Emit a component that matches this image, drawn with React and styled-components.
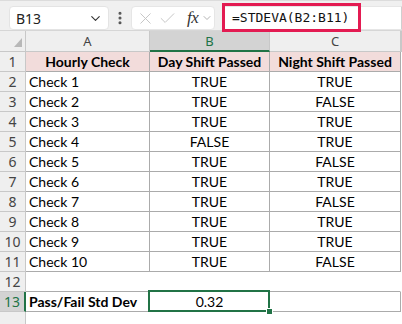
import React from "react";
import styled, { createGlobalStyle } from "styled-components";
import { ChevronDown, EllipsisVertical, X, Check } from "lucide-react";

const GlobalStyle = createGlobalStyle`
  html, body {
    margin: 0;
    padding: 0;
    background: #ffffff;
  }
  body {
    font-family: Lato, "Liberation Sans", sans-serif;
  }
`;

const GREEN = "#217346";
const PINK = "#f2dcdb";

const rows = [
  ["Check 1", "TRUE", "TRUE"],
  ["Check 2", "TRUE", "FALSE"],
  ["Check 3", "TRUE", "TRUE"],
  ["Check 4", "FALSE", "TRUE"],
  ["Check 5", "TRUE", "FALSE"],
  ["Check 6", "TRUE", "TRUE"],
  ["Check 7", "TRUE", "FALSE"],
  ["Check 8", "TRUE", "TRUE"],
  ["Check 9", "TRUE", "TRUE"],
  ["Check 10", "TRUE", "FALSE"],
];

const Window = styled.div`
  width: 402px;
  height: 324px;
  overflow: hidden;
  background: #ffffff;
  display: flex;
  flex-direction: column;
`;

const TopStrip = styled.div`
  height: 3px;
  background: #f7f7f7;
  border-bottom: 1px solid #dcdcdc;
`;

const FormulaBar = styled.div`
  box-sizing: border-box;
  height: 36px;
  background: #f0f0f0;
  border-bottom: 1px solid #d6d6d6;
  display: flex;
  align-items: flex-start;
  padding: 5px 0 0 9px;
`;

const NameBox = styled.div`
  box-sizing: border-box;
  width: 100px;
  height: 24px;
  background: #ffffff;
  border: 1px solid #e4e4e4;
  border-radius: 4px;
  display: flex;
  align-items: center;
  justify-content: space-between;
  padding: 0 5px 0 6px;
  font-family: "Noto Sans", "Liberation Sans", sans-serif;
  font-size: 14px;
  color: #222;
`;

const Dots = styled.div`
  width: 22px;
  height: 24px;
  display: flex;
  align-items: center;
  justify-content: center;
  color: #555;
`;

const ActionBox = styled.div`
  box-sizing: border-box;
  width: 84px;
  height: 24px;
  background: #ffffff;
  border: 1px solid #e6e6e6;
  border-radius: 4px;
  display: flex;
  align-items: center;
  padding-left: 4px;
  gap: 3px;
  color: #c4c4c4;
`;

const Fx = styled.span`
  font-family: "Liberation Serif", "DejaVu Serif", serif;
  font-style: italic;
  font-size: 17px;
  color: #333;
  margin-left: 7px;
  letter-spacing: -0.5px;
`;

const FormulaInput = styled.div`
  position: relative;
  box-sizing: border-box;
  flex: 1;
  height: 24px;
  margin-left: 7px;
  background: #ffffff;
  border: 1px solid #e6e6e6;
  border-right-color: #cfcfcf;
  border-radius: 4px 0 0 4px;
`;

const Highlight = styled.div`
  position: absolute;
  box-sizing: border-box;
  top: -4px;
  left: -1px;
  width: 139px;
  height: 29px;
  border: 3px solid #e31b52;
  display: flex;
  align-items: center;
  padding-left: 7px;
  font-family: "DejaVu Sans Mono", "Liberation Mono", monospace;
  font-size: 13px;
  color: #111;
`;

const Sheet = styled.div`
  display: grid;
  grid-template-columns: 26px 124px 120px 131px 1fr;
  grid-auto-rows: 20px;
  grid-template-rows: 21px;
`;

const Corner = styled.div`
  box-sizing: border-box;
  background: #efefef;
  border-right: 1px solid #c8c8c8;
  border-bottom: 1px solid #c8c8c8;
  display: flex;
  align-items: flex-end;
  justify-content: flex-end;
  padding: 0 3px 4px 0;
`;

const ColHead = styled.div`
  box-sizing: border-box;
  background: ${(p) => (p.$active ? "#d3d3d3" : "#efefef")};
  color: ${(p) => (p.$active ? GREEN : "#444")};
  border-right: 1px solid #c8c8c8;
  border-bottom: ${(p) => (p.$active ? `2px solid ${GREEN}` : "1px solid #c8c8c8")};
  font-family: "Noto Sans", "Liberation Sans", sans-serif;
  font-size: 13px;
  line-height: 20px;
  text-align: center;
`;

const RowHead = styled.div`
  box-sizing: border-box;
  background: ${(p) => (p.$active ? "#d3d3d3" : "#efefef")};
  color: ${(p) => (p.$active ? GREEN : "#444")};
  border-right: ${(p) => (p.$active ? `2px solid ${GREEN}` : "1px solid #c8c8c8")};
  border-bottom: 1px solid #c8c8c8;
  font-family: "Noto Sans", "Liberation Sans", sans-serif;
  font-size: 14px;
  line-height: 19px;
  text-align: center;
`;

const Cell = styled.div`
  position: relative;
  box-sizing: border-box;
  padding: 0 3px;
  font-size: 14px;
  line-height: 19px;
  color: #000;
  white-space: nowrap;
  text-align: ${(p) => p.$align || "left"};
  font-weight: ${(p) => (p.$bold ? 700 : 400)};
  background: ${(p) => p.$fill || "#ffffff"};
  border-right: 1px solid ${(p) => (p.$lined ? "#ababab" : "#ffffff")};
  border-bottom: 1px solid ${(p) => (p.$lined || p.$under ? "#ababab" : "#ffffff")};

  ${(p) =>
    p.$selected &&
    `
    &::after {
      content: "";
      position: absolute;
      z-index: 2;
      top: -2px;
      left: -2px;
      right: -1px;
      bottom: -1px;
      border: 2px solid ${GREEN};
    }
    &::before {
      content: "";
      position: absolute;
      z-index: 3;
      right: -4px;
      bottom: -4px;
      width: 5px;
      height: 5px;
      background: ${GREEN};
      border: 1px solid #fff;
    }
  `}
`;

const Filler = styled.div`
  background: #ffffff;
`;

export default function App() {
  return (
    <>
      <GlobalStyle />
      <Window>
        <TopStrip />
        <FormulaBar>
          <NameBox>
            <span>B13</span>
            <ChevronDown size={15} color="#333" strokeWidth={1.8} />
          </NameBox>
          <Dots>
            <EllipsisVertical size={16} strokeWidth={2.6} />
          </Dots>
          <ActionBox>
            <X size={19} strokeWidth={1.2} />
            <Check size={19} strokeWidth={1.2} />
            <Fx>fx</Fx>
            <ChevronDown size={12} color="#999" strokeWidth={1.5} />
          </ActionBox>
          <FormulaInput>
            <Highlight>=STDEVA(B2:B11)</Highlight>
          </FormulaInput>
        </FormulaBar>

        <Sheet>
          <Corner>
            <svg width="8" height="9" viewBox="0 0 8 9">
              <polygon points="8,0 8,9 0,9" fill="#b8b8b8" />
            </svg>
          </Corner>
          <ColHead>A</ColHead>
          <ColHead $active>B</ColHead>
          <ColHead>C</ColHead>
          <ColHead />

          <RowHead>1</RowHead>
          <Cell $lined $bold $fill={PINK} $align="center">Hourly Check</Cell>
          <Cell $lined $bold $fill={PINK} $align="center">Day Shift Passed</Cell>
          <Cell $lined $bold $fill={PINK} $align="center">Night Shift Passed</Cell>
          <Filler />

          {rows.map((r, i) => (
            <React.Fragment key={r[0]}>
              <RowHead>{i + 2}</RowHead>
              <Cell $lined>{r[0]}</Cell>
              <Cell $lined $align="center">{r[1]}</Cell>
              <Cell $lined $align="center">{r[2]}</Cell>
              <Filler />
            </React.Fragment>
          ))}

          <RowHead>12</RowHead>
          <Cell $under />
          <Cell $under />
          <Cell $under />
          <Filler />

          <RowHead $active>13</RowHead>
          <Cell $lined $bold>Pass/Fail Std Dev</Cell>
          <Cell $lined $selected $align="center">0.32</Cell>
          <Cell $lined />
          <Filler />

          <RowHead />
          <Cell />
          <Cell />
          <Cell />
          <Filler />
        </Sheet>
      </Window>
    </>
  );
}
